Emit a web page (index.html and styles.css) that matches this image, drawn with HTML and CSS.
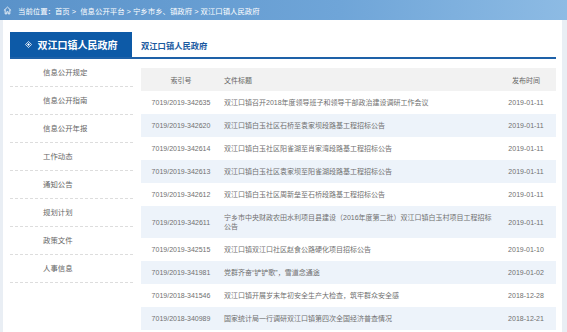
FILE: index.html
```html
<!DOCTYPE html>
<html lang="zh-CN">
<head>
  <meta charset="utf-8">
  <title>双江口镇人民政府</title>
  <link rel="stylesheet" href="styles.css">
</head>
<body>
<div class="crumb">
  <svg class="home" width="9" height="9" viewBox="0 0 10 10"><path d="M1 5 L5 1.2 L9 5 M2.4 4 V8.8 H4.2 V6.4 H5.8 V8.8 H7.6 V4" fill="none" stroke="#fff" stroke-width="0.9"/></svg>
  <span>当前位置：首页 &gt; &nbsp;信息公开平台 &gt; 宁乡市乡、镇政府 &gt; 双江口镇人民政府</span>
</div>

<div class="page">
  <div class="head">
    <div class="tab">
      <svg width="7" height="7" viewBox="0 0 8 8"><path d="M4 0.5 L7.5 4 L4 7.5 L0.5 4 Z" fill="none" stroke="#fff" stroke-width="0.9"/><path d="M4 2.4 L5.6 4 L4 5.6 L2.4 4 Z" fill="#fff"/></svg>
      双江口镇人民政府
    </div>
    <div class="sub">双江口镇人民政府</div>
  </div>

  <div class="body">
    <ul class="menu">
      <li>信息公开规定</li>
      <li>信息公开指南</li>
      <li>信息公开年报</li>
      <li>工作动态</li>
      <li>通知公告</li>
      <li>规划计划</li>
      <li>政策文件</li>
      <li>人事信息</li>
    </ul>

    <table class="list">
      <thead>
      <tr>
        <th class="idx">索引号</th>
        <th class="title">文件标题</th>
        <th class="date">发布时间</th>
      </tr>
      </thead>
      <tbody>
      <tr><td class="idx">7019/2019-342635</td><td class="title">双江口镇召开2018年度领导班子和领导干部政治建设调研工作会议</td><td class="date">2019-01-11</td></tr>
      <tr><td class="idx">7019/2019-342620</td><td class="title">双江口镇白玉社区石桥至袁家坝段路基工程招标公告</td><td class="date">2019-01-11</td></tr>
      <tr><td class="idx">7019/2019-342614</td><td class="title">双江口镇白玉社区阳雀湖至肖家湾段路基工程招标公告</td><td class="date">2019-01-11</td></tr>
      <tr><td class="idx">7019/2019-342613</td><td class="title">双江口镇白玉社区袁家坝至阳雀湖段路基工程招标公告</td><td class="date">2019-01-11</td></tr>
      <tr><td class="idx">7019/2019-342612</td><td class="title">双江口镇白玉社区周新垒至石桥段路基工程招标公告</td><td class="date">2019-01-11</td></tr>
      <tr><td class="idx">7019/2019-342611</td><td class="title">宁乡市中央财政农田水利项目县建设（2016年度第二批）双江口镇白玉村项目工程招标公告</td><td class="date">2019-01-11</td></tr>
      <tr><td class="idx">7019/2019-342515</td><td class="title">双江口镇双江口社区赵食公路硬化项目招标公告</td><td class="date">2019-01-10</td></tr>
      <tr><td class="idx">7019/2019-341981</td><td class="title">党群齐奋“铲铲歌”，雪道念通途</td><td class="date">2019-01-02</td></tr>
      <tr><td class="idx">7019/2018-341546</td><td class="title">双江口镇开展岁末年初安全生产大检查，筑牢群众安全感</td><td class="date">2018-12-28</td></tr>
      <tr><td class="idx">7019/2018-340989</td><td class="title">国家统计局一行调研双江口镇第四次全国经济普查情况</td><td class="date">2018-12-21</td></tr>
      </tbody>
    </table>
  </div>
</div>
</body>
</html>
```

FILE: styles.css
```css
body {
  margin: 0;
  font-family: 'Liberation Sans', 'Noto Sans CJK SC', sans-serif;
  background-color: #e9eef4;
  color: #707070;
  overflow: hidden;
}

.crumb {
  height: 20px;
  display: flex;
  align-items: center;
  gap: 6px;
  padding-left: 3px;
  background: linear-gradient(to right, #5a92c9, #6fa5d8 60%, #8dbbe4);
  color: white;
  font-size: 7.4px;
}

.page {
  margin: 0 5px 0 3px;
  background-color: white;
  padding: 12px 6px 0 7px;
  height: 300px;
}

.head {
  display: flex;
  align-items: center;
  border-bottom: 2px solid #1e61a8;
}

.tab {
  width: 122px;
  height: 25px;
  background-color: #0d5aa7;
  color: white;
  font-size: 10px;
  font-weight: bold;
  display: flex;
  align-items: center;
  justify-content: center;
  gap: 6px;
}

.sub {
  margin-left: 9px;
  color: #1a5aa0;
  font-size: 8.3px;
  font-weight: bold;
}

.body {
  display: flex;
  gap: 8px;
}

.menu {
  list-style: none;
  margin: 0;
  padding: 0;
  width: 123px;
  flex: none;
}

.menu li {
  height: 27px;
  line-height: 27px;
  border-bottom: 1px dashed #ddd;
  padding-left: 33px;
  font-size: 7.4px;
  color: #666;
}

.list {
  flex: 1;
  margin-top: 9px;
  border-collapse: collapse;
  font-size: 7px;
  table-layout: fixed;
}

.list th {
  background-color: #f2f2f2;
  font-weight: normal;
  color: #666;
  height: 23px;
  padding: 0 3px;
}

.list td {
  padding: 7px 3px;
  line-height: 9px;
}

.list tbody tr:nth-child(even) td {
  background-color: #edf3fa;
}

.idx {
  width: 74px;
  text-align: center;
}

.title {
  text-align: left;
}

.date {
  width: 54px;
  text-align: center;
}
```
